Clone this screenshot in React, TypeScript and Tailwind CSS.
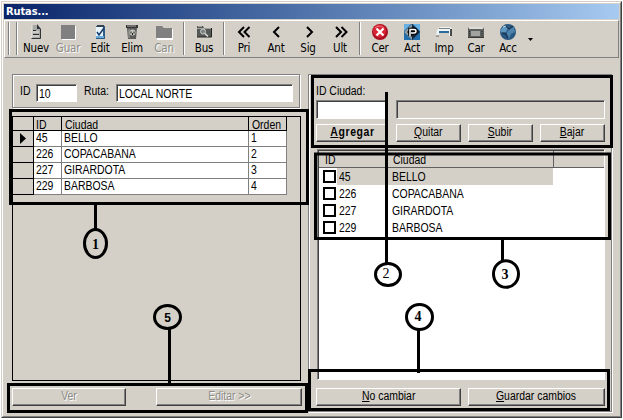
import type { ReactNode } from "react";

const raised =
  "border border-t-white border-l-white border-r-[#404040] border-b-[#404040] shadow-[inset_-1px_-1px_0_#808080]";
const sunken =
  "border border-t-[#808080] border-l-[#808080] border-r-white border-b-white shadow-[inset_1px_1px_0_#404040]";

function DocIcon() {
  return (
    <svg width="16" height="16" viewBox="0 0 16 16">
      <path d="M4 1h5l4 4v10H4z" fill="#a9aaa6" />
      <path d="M12.500 5v9.500H3.500" fill="none" stroke="#303638" />
      <path d="M4 1v13" stroke="#e8e8e0" />
      <path d="M9 0v5h4z" fill="#303638" />
      <path d="M5 6.500h3M5 10.500h6" stroke="#292d2f" />
      <path d="M5 8h6M5 12h6" stroke="#f1f1ec" />
    </svg>
  );
}

function SaveIcon() {
  return (
    <svg width="16" height="16" viewBox="0 0 16 16">
      <path d="M2 2h14v14H2z" fill="#fff" />
      <path d="M1 1h14v14H1z" fill="#808080" />
    </svg>
  );
}

function EditIcon() {
  return (
    <svg width="16" height="16" viewBox="0 0 16 16">
      <path d="M4 2h9v13H4z" fill="#315c88" />
      <path d="M4 3h7v10H4z" fill="#e8f5ff" />
      <path d="M4 13h8" stroke="#69abd9" strokeWidth="2" />
      <path d="M5 1h7v2H5z" fill="#334454" />
      <path d="M5 8l2 3 5-7" fill="none" stroke="#143a67" strokeWidth="1.500" />
    </svg>
  );
}

function TrashIcon() {
  return (
    <svg width="16" height="16" viewBox="0 0 16 16">
      <path d="M3 4h10l-1 11H4z" fill="#5c5c5a" />
      <path d="M2 1h12v3H2z" fill="#373737" />
      <path d="M3 2h9" stroke="#aaa" />
      <path d="M5 5v9" stroke="#a5a5a0" />
      <circle cx="8.500" cy="8.500" r="3" fill="#c8c8c2" />
      <path d="M7 7.500v2M10 7.500v2M8.500 9v2" stroke="#1b1b1b" />
    </svg>
  );
}

function FolderIcon() {
  return (
    <svg width="18" height="16" viewBox="0 0 18 16">
      <path d="M2 3h6l2 2h8v11H2z" fill="#fff" />
      <path d="M1 2h6l2 2h8v10H1z" fill="#808080" />
    </svg>
  );
}

function SearchIcon() {
  return (
    <svg width="16" height="16" viewBox="0 0 16 16">
      <path d="M1 2h6l1 2h8v9H1z" fill="#565856" />
      <path d="M1 4.500h14M2 2.500h4" stroke="#a2a39f" />
      <path d="M15.500 4v9H1" fill="none" stroke="#202422" />
      <circle cx="7" cy="7.500" r="2.500" fill="#7b8482" stroke="#c9ccc7" />
      <path d="M9 9.500l3 3" stroke="#deded8" strokeWidth="1.500" />
    </svg>
  );
}

function Chevron({ d }: { d: string }) {
  return (
    <svg width="16" height="16" viewBox="0 0 16 16">
      <path d={d} fill="none" stroke="#000" strokeWidth="2" />
    </svg>
  );
}

function CloseIcon() {
  return (
    <svg width="16" height="16" viewBox="0 0 16 16">
      <circle cx="8" cy="8" r="8" fill="#a80f20" />
      <circle cx="7.500" cy="7" r="6.500" fill="#d82637" />
      <path d="M3 4Q7 0 12 4" fill="none" stroke="#f07c80" />
      <path d="M4.500 4.500l7 7M11.500 4.500l-7 7" stroke="#fff" strokeWidth="2.200" />
    </svg>
  );
}

function RefreshIcon() {
  return (
    <svg width="16" height="16" viewBox="0 0 16 16">
      <path d="M0 0h16v16H0z" fill="#226fae" />
      <path d="M0 0h7L0 7zM9 0h7v7z" fill="#69b1e2" />
      <path d="M8 0l8 8-8 8-8-8z" fill="#152538" />
      <path d="M0 8l8-8v3L3 8l5 5v3z" fill="#8f9da5" />
      <path d="M6 12V5.500h4q2 0 2 1.700t-2 1.800H7" fill="none" stroke="#000" strokeWidth="3.500" />
      <path d="M6 12V5.500h4q2 0 2 1.700t-2 1.800H7" fill="none" stroke="#fff" strokeWidth="1.500" />
    </svg>
  );
}

function PrinterIcon() {
  return (
    <svg width="16" height="16" viewBox="0 0 16 16">
      <path d="M1 6l3-3h10l2 2v7h-3V9H3v3H0z" fill="#f2f5f5" />
      <path d="M3 4.500h11" stroke="#777f80" />
      <path d="M3 7h10v2H3z" fill="#2c6b9d" />
      <path d="M14 5v7h2V5" fill="#45494a" />
      <path d="M0 12h3" stroke="#555" />
    </svg>
  );
}

function CardIcon() {
  return (
    <svg width="16" height="16" viewBox="0 0 16 16">
      <path d="M0 4l2-1h13l1 2v9H0z" fill="#5e605e" />
      <path d="M1 4h14" stroke="#deded9" strokeWidth="2" />
      <path d="M3 7h9v5H3z" fill="#a2a39f" />
      <path d="M1.500 7v6M14 7v6" stroke="#292b2a" strokeDasharray="1 1" />
      <path d="M0 13.500h16" stroke="#363836" />
    </svg>
  );
}

function GlobeIcon() {
  return (
    <svg width="16" height="16" viewBox="0 0 16 16">
      <circle cx="8" cy="8" r="8" fill="#2a5780" />
      <path d="M2 4l3-3 4 2-3 5-4 1-2-2z" fill="#5f97c0" />
      <path d="M9 5l5-2 1 5-4 2-2 5-3-5z" fill="#4d82ad" />
      <path d="M5 1l4 4 4-3M2 9l4 1 2 4" fill="none" stroke="#1b3857" strokeWidth="1.500" />
      <path d="M3 3l3-1" stroke="#b8dcf1" />
    </svg>
  );
}

function Tool({ label, icon, off }: { label: string; icon: ReactNode; off?: boolean }) {
  return (
    <div className="flex w-8 shrink-0 flex-col items-center pt-[3px]">
      <div className="flex h-4 items-center justify-center">{icon}</div>
      <span
        className={`mt-[1px] text-[11.5px] leading-[14px] tracking-[-0.2px] font-['DejaVu_Sans_Condensed','DejaVu_Sans',sans-serif] ${
          off ? "text-[#8d8b86] [text-shadow:1px_1px_0_#fff]" : ""
        }`}
      >
        {label}
      </span>
    </div>
  );
}

function Separator() {
  return (
    <div className="flex w-2 shrink-0 justify-center pt-px">
      <div className="h-[33px] w-[2px] border-r border-l border-r-white border-l-[#808080]" />
    </div>
  );
}

/* Condensed dialog lettering */
function Label({ children }: { children: ReactNode }) {
  return <span className="inline-block origin-left scale-x-[0.87] whitespace-nowrap">{children}</span>;
}

function Button({ className, children }: { className: string; children: ReactNode }) {
  return (
    <button
      className={`flex h-[18px] shrink-0 items-center justify-center pb-[2px] whitespace-nowrap ${raised} ${className}`}
    >
      <span className="inline-block scale-x-[0.87]">{children}</span>
    </button>
  );
}

const cities = [
  ["45", "BELLO"],
  ["226", "COPACABANA"],
  ["227", "GIRARDOTA"],
  ["229", "BARBOSA"],
];

function RouteGrid() {
  return (
    <div className="mt-[8px] h-[265px] w-[289px] border border-black">
      <div className="flex h-[14px] w-[274px] border-b border-black leading-[16px]">
        <div className="w-[21px] shrink-0 border-r border-black" />
        <div className="w-[28px] shrink-0 border-r border-black pl-[2px]">
          <Label>ID</Label>
        </div>
        <div className="w-[187px] shrink-0 border-r border-black pl-[3px]">
          <Label>Ciudad</Label>
        </div>
        <div className="w-[38px] shrink-0 border-r border-black pl-[3px]">
          <Label>Orden</Label>
        </div>
      </div>
      {cities.map(([id, name], i) => (
        <div key={id} className="flex h-4 leading-[14px]">
          <div className="flex w-[21px] items-center justify-center border-r border-b border-black">
            {i === 0 && (
              <svg width="6" height="11" viewBox="0 0 6 11">
                <path d="M0 0l6 5.500L0 11z" />
              </svg>
            )}
          </div>
          <div className="w-[28px] border-r border-b border-[#808080] bg-white pl-[2px]">
            <Label>{id}</Label>
          </div>
          <div className="w-[187px] border-r border-b border-[#808080] bg-white pl-[2px]">
            <Label>{name}</Label>
          </div>
          <div className="w-[38px] border-r border-b border-[#808080] bg-white pl-[2px]">
            <Label>{i + 1}</Label>
          </div>
        </div>
      ))}
    </div>
  );
}

function CityList() {
  return (
    <div className={`mt-[7px] ml-px h-[231px] w-[288px] bg-white pt-px pl-px ${sunken}`}>
      <div className="flex h-[17px] border-b border-[#606060] bg-[#d4d0c8] leading-[19px]">
        <div className="w-[67px] border-r border-[#606060] pl-[6px]">
          <Label>ID</Label>
        </div>
        <div className="w-[168px] border-r border-[#606060] pl-[7px]">
          <Label>Ciudad</Label>
        </div>
      </div>
      {cities.map(([id, name], i) => (
        <div key={id} className="flex h-[17px] items-center">
          <div className="flex w-[18px] pl-[4px]">
            <div className="h-[13px] w-[13px] border-2 border-black bg-white" />
          </div>
          <div className={`flex h-[17px] w-[216px] leading-[18px] ${i === 0 ? "bg-[#d4d0c8]" : ""}`}>
            <div className="w-[55px] pl-[2px]">
              <Label>{id}</Label>
            </div>
            <Label>{name}</Label>
          </div>
        </div>
      ))}
    </div>
  );
}

const frames = [
  [10.5, 110.5, 297, 93],
  [312.5, 76.5, 299, 70],
  [315.5, 154, 294, 84.5],
  [309.5, 370.5, 299, 39],
  [8.5, 384.5, 298, 27],
];

const marks = [
  { n: "1", x: 95.5, y: 243.5, rx: 11, ry: 14, line: "M95.500 203v26" },
  { n: "2", x: 388, y: 274.5, rx: 12.5, ry: 11, line: "M386.500 92v171" },
  { n: "3", x: 506, y: 274, rx: 12.5, ry: 13.3, line: "M502.500 239v22" },
  { n: "4", x: 419.5, y: 317, rx: 13, ry: 12.5, line: "M418.500 330v43" },
  { n: "5", x: 167.5, y: 317, rx: 13, ry: 11.5, line: "M169.500 329v57" },
];

function Callouts() {
  return (
    <svg className="pointer-events-none absolute inset-0" width="623" height="420" viewBox="0 0 623 420">
      <g fill="none" stroke="#000" strokeWidth="3">
        {frames.map(([x, y, w, h]) => (
          <rect key={y} x={x} y={y} width={w} height={h} />
        ))}
        {marks.map((m) => (
          <g key={m.n}>
            <path d={m.line} />
            <ellipse cx={m.x} cy={m.y} rx={m.rx} ry={m.ry} />
          </g>
        ))}
      </g>
      {marks.map((m) => (
        <text
          key={m.n}
          x={m.n === "2" ? 386 : m.n === "3" ? 505 : m.n === "4" ? 418 : m.x}
          y={m.n === "2" ? 277.5 : m.n === "1" ? 249 : m.n === "5" ? 321.5 : m.n === "4" ? 320.5 : 279}
          textAnchor="middle"
          className={
            m.n === "5"
              ? "text-[12px] font-bold font-['Liberation_Sans',sans-serif]"
              : m.n === "2"
                ? "text-[14px] font-['Liberation_Serif',serif]"
                : "text-[14px] font-bold font-['Liberation_Serif',serif]"
          }
        >
          {m.n}
        </text>
      ))}
    </svg>
  );
}

export default function App() {
  return (
    <div className="relative h-[420px] w-[623px] overflow-hidden bg-white p-px text-[12px] text-black font-['Liberation_Sans',Arial,sans-serif]">
      <div className="h-[417px] w-[621px] border border-t-[#d4d0c8] border-l-[#d4d0c8] border-r-[#404040] border-b-[#404040]">
        <div className="h-[415px] w-[619px] border border-t-white border-l-white border-r-[#808080] border-b-[#808080] bg-[#d4d0c8] pt-px pl-px">
          <div className="h-[15px] w-[615px] bg-linear-to-r from-[#0a246a] to-[#a6caf0] pl-[2px] text-[11px] leading-[15px] font-bold tracking-[-0.1px] text-white font-['DejaVu_Sans_Condensed','DejaVu_Sans',sans-serif]">
            Rutas...
          </div>
          <div className="mt-px flex h-[38px] w-[615px] border border-t-white border-l-white border-r-[#808080] border-b-[#808080] pl-[3px]">
            <div className="mt-px h-[33px] w-[2px] border-r border-l border-r-white border-l-[#808080]" />
            <div className="mt-px mr-[2px] ml-[6px] h-[33px] w-[2px] border-r border-l border-r-white border-l-[#808080]" />
            <Tool label="Nuev" icon={<DocIcon />} />
            <Tool label="Guar" icon={<SaveIcon />} off />
            <Tool label="Edit" icon={<EditIcon />} />
            <Tool label="Elim" icon={<TrashIcon />} />
            <Tool label="Can" icon={<FolderIcon />} off />
            <Separator />
            <Tool label="Bus" icon={<SearchIcon />} />
            <Separator />
            <Tool label="Pri" icon={<Chevron d="M8 3L3 8l5 5M13.500 3l-5 5 5 5" />} />
            <Tool label="Ant" icon={<Chevron d="M11 3L6 8l5 5" />} />
            <Tool label="Sig" icon={<Chevron d="M7 3l5 5-5 5" />} />
            <Tool label="Ult" icon={<Chevron d="M4 3l5 5-5 5M9.500 3l5 5-5 5" />} />
            <Separator />
            <Tool label="Cer" icon={<CloseIcon />} />
            <Tool label="Act" icon={<RefreshIcon />} />
            <Tool label="Imp" icon={<PrinterIcon />} />
            <Tool label="Car" icon={<CardIcon />} />
            <Tool label="Acc" icon={<GlobeIcon />} />
            <svg className="mt-[17px] ml-1" width="5" height="3" viewBox="0 0 5 3">
              <path d="M0 0h5L2.500 3z" />
            </svg>
          </div>

          <div className="flex pt-[16px] pl-[8px]">
            <div className="w-[296px] shrink-0">
              <div className="flex h-[34px] w-[288px] border border-[#808080] pt-[9px] pl-[7px] shadow-[1px_1px_0_#fff,inset_1px_1px_0_#fff]">
                <div className="w-[16px] leading-[14px]">
                  <Label>ID</Label>
                </div>
                <div className={`h-[18px] w-[41px] bg-white pl-[2px] leading-[18px] ${sunken}`}>
                  <Label>10</Label>
                </div>
                <div className="ml-[7px] w-[32px] leading-[14px]">
                  <Label>Ruta:</Label>
                </div>
                <div className={`h-[18px] w-[177px] bg-white pl-[2px] leading-[18px] ${sunken}`}>
                  <Label>LOCAL NORTE</Label>
                </div>
              </div>
              <RouteGrid />
              <div className="mt-[7px] flex gap-[30px]">
                <Button className="w-[114px] text-[#8d8b86] [text-shadow:1px_1px_0_#fff]">Ver</Button>
                <Button className="w-[146px] text-[#8d8b86] [text-shadow:1px_1px_0_#fff]">Editar &gt;&gt;</Button>
              </div>
            </div>
            <div className="h-[338px] w-[304px] border border-[#808080] pt-[9px] pl-[7px] shadow-[1px_1px_0_#fff,inset_1px_1px_0_#fff]">
              <div className="h-4 leading-[14px]">
                <Label>ID Ciudad:</Label>
              </div>
              <div className="flex gap-[8px]">
                <div className={`h-[19px] w-[72px] bg-white ${sunken}`} />
                <div className={`h-[19px] w-[209px] ${sunken}`} />
              </div>
              <div className="mt-[5px] flex">
                <Button className="mr-[8px] w-[72px] font-bold tracking-[0.7px]">
                  <u>A</u>gregar
                </Button>
                <Button className="mr-[7px] w-[65px]">
                  <u>Q</u>uitar
                </Button>
                <Button className="mr-[7px] w-[65px]">
                  <u>S</u>ubir
                </Button>
                <Button className="w-[65px]">
                  <u>B</u>ajar
                </Button>
              </div>
              <CityList />
              <div className="mt-[8px] flex gap-[7px]">
                <Button className="w-[145px]">
                  <u>N</u>o cambiar
                </Button>
                <Button className="w-[137px]">
                  <u>G</u>uardar cambios
                </Button>
              </div>
            </div>
          </div>
        </div>
      </div>
      <Callouts />
    </div>
  );
}
